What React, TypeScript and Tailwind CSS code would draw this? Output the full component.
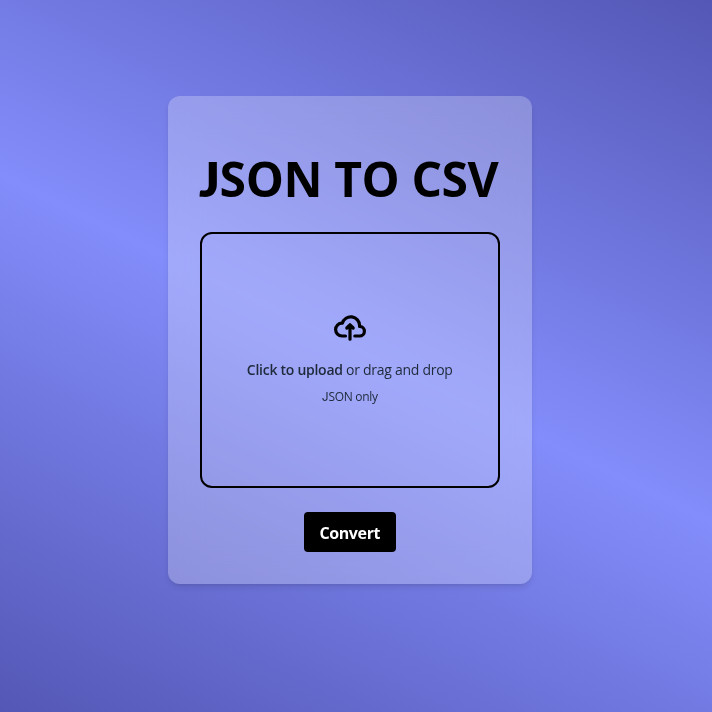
export default function App() {
  return (
    <main className="flex h-screen w-full items-center justify-center bg-[linear-gradient(26deg,#5457b5_0%,#838dfb_50.7%,#5457b5_100%)] pr-[12.5px] pb-8 font-['Open_Sans','Noto_Sans',sans-serif] text-black">
      <section className="flex h-[488px] w-[363.5px] flex-col items-center rounded-xl bg-white/25 p-8 shadow-md backdrop-blur-lg">
        <h1 className="flex h-[104px] items-center text-[48px] leading-none font-bold tracking-[-0.4px] whitespace-nowrap">
          <span className="-translate-x-px -translate-y-px">
            <span className="font-['Lato'] font-extrabold">J</span>SON TO CSV
          </span>
        </h1>
        <label className="flex h-64 w-full shrink-0 cursor-pointer flex-col items-center justify-center rounded-xl border-2 border-black pb-1">
          <svg className="mb-4 h-8 w-8" fill="none" viewBox="0 0 20 16" aria-hidden="true">
            <path
              stroke="currentColor"
              strokeLinecap="round"
              strokeLinejoin="round"
              strokeWidth="2"
              d="M13 13h3a3 3 0 0 0 0-6h-.025A5.56 5.56 0 0 0 16 6.5 5.5 5.5 0 0 0 5.207 5.021C5.137 5.017 5.071 5 5 5a4 4 0 0 0 0 8h2.167M10 15V6m0 0L8 8m2-2 2 2"
            />
          </svg>
          <p className="mb-2 text-sm tracking-[-0.27px] whitespace-nowrap text-gray-800">
            <span className="font-semibold">Click to upload</span> or drag and drop
          </p>
          <p className="translate-y-px text-xs tracking-[-0.3px] text-gray-800">
            <span className="font-['Inter']">J</span>SON only
          </p>
          <input type="file" className="hidden" />
        </label>
        <button className="mt-6 h-10 w-[92px] shrink-0 rounded bg-black pt-0.5 text-base font-bold tracking-[-0.4px] text-white">
          Convert
        </button>
      </section>
    </main>
  );
}
